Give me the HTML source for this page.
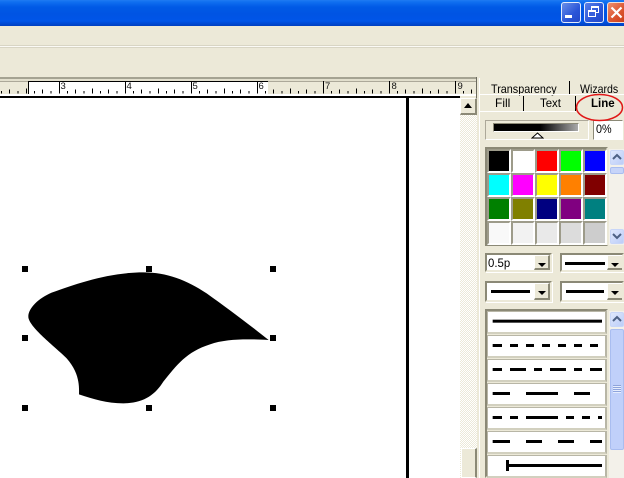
<!DOCTYPE html>
<html>
<head>
<meta charset="utf-8">
<style>
html,body{margin:0;padding:0;width:624px;height:478px;overflow:hidden;background:#ece9d8}
body{position:relative;font-family:"Liberation Sans",sans-serif;color:#000}
.a{position:absolute;box-sizing:border-box}
.t{position:absolute;font-size:12px;line-height:14px;white-space:nowrap;transform-origin:0 0}
.sw{position:absolute;width:24px;height:24px;box-sizing:border-box;border:2px solid;border-color:#9d9b8a #fff #fff #9d9b8a;outline:0}
.sw i{position:absolute;left:0;top:0;width:20px;height:20px}
.dd{position:absolute;box-sizing:border-box;background:#fff;border:2px solid;border-color:#8b8976 #ece9d8 #ece9d8 #8b8976;box-shadow:1px 1px 0 #fff}
.btn{position:absolute;right:0;top:0;bottom:0;width:16px;background:#ece9d8;border-right:2px solid #8b8976;border-bottom:2px solid #8b8976;border-left:1px solid #fff;border-top:1px solid #fff;box-sizing:border-box}
.btn:after{content:"";position:absolute;left:3px;top:7px;border:4px solid transparent;border-top:4px solid #000;border-bottom:0}
.it{position:absolute;left:487px;width:120px;height:23px;background:#fff;box-sizing:border-box;border:1px solid #b8b6a6;border-right:2px solid #b8b6a6;border-bottom:2px solid #d2d0bf}
</style>
</head>
<body>
<!-- title bar -->
<div class="a" style="left:0;top:0;width:624px;height:26px;background:linear-gradient(#1f7bf3 0,#0f6ff0 2px,#005ae6 7px,#0054e3 14px,#0055e8 21px,#0048d0 24px,#003fc0 26px)"></div>
<div class="a" style="left:561px;top:2px;width:20px;height:21px;border:1px solid #e4ecfb;border-radius:3px;background:linear-gradient(135deg,#6a8fe8,#2a55d8 60%,#2348c8)"></div>
<div class="a" style="left:565px;top:15px;width:7px;height:3px;background:#fff"></div>
<div class="a" style="left:584px;top:2px;width:20px;height:21px;border:1px solid #e4ecfb;border-radius:3px;background:linear-gradient(135deg,#5a80e6,#2a55d8 60%,#2348c8)"></div>
<div class="a" style="left:591px;top:6px;width:8px;height:7px;border:1px solid #fff;border-top-width:2px"></div>
<div class="a" style="left:588px;top:10px;width:8px;height:7px;border:1px solid #fff;border-top-width:2px;background:#3860dc"></div>
<div class="a" style="left:607px;top:2px;width:20px;height:21px;border:1px solid #f0e0d8;border-radius:3px;background:linear-gradient(135deg,#ee9070,#dc5530 55%,#c83c18)"></div>
<svg class="a" style="left:610px;top:6px" width="14" height="14"><path d="M1.5 1.5L11.5 11.5M11.5 1.5L1.5 11.5" stroke="#fff" stroke-width="2.2" fill="none"/></svg>
<!-- toolbar separators -->
<div class="a" style="left:0;top:45px;width:624px;height:1px;background:#d8d5c4"></div>
<div class="a" style="left:0;top:46px;width:624px;height:1px;background:#fbfaf5"></div>
<div class="a" style="left:0;top:47px;width:624px;height:1px;background:#d8d5c4"></div>
<div class="a" style="left:0;top:77px;width:477px;height:2px;background:#a5a392"></div>
<div class="a" style="left:0;top:79px;width:477px;height:2px;background:#e2dfcd"></div>
<!-- ruler -->
<div class="a" style="left:28px;top:81px;width:240px;height:15px;background:#fff;border-left:1px solid #000;border-top:1px solid #000"></div>
<div class="a" style="left:0;top:81px;width:28px;height:1px;background:#aca899"></div>
<div class="a" style="left:268px;top:81px;width:208px;height:1px;background:#aca899"></div>
<div class="a" style="left:0;top:94px;width:476px;height:2px;background:#fff"></div>
<div class="a" style="left:476px;top:77px;width:1px;height:21px;background:#6b6a5e"></div>
<svg class="a" style="left:0;top:81px" width="476" height="15">
<defs>
<pattern id="p" x="59" y="0" width="66" height="15" patternUnits="userSpaceOnUse">
<path d="M0.5 0V12.5M8.5 10V12.5M16.5 8.5V12.5M25 10V12.5M33.5 7.5V12.5M41.5 10V12.5M49.5 8.5V12.5M58 10V12.5" stroke="#000" stroke-width="1" fill="none"/>
</pattern>
</defs>
<rect width="476" height="15" fill="url(#p)"/>
<g font-family="Liberation Sans" font-size="9.5" fill="#111">
<text x="60.5" y="8">3</text>
<text x="126.5" y="8">4</text>
<text x="192.5" y="8">5</text>
<text x="258.5" y="8">6</text>
<text x="325" y="8">7</text>
<text x="391.5" y="8">8</text>
<text x="457.5" y="8">9</text>
</g>
</svg>
<div class="a" style="left:0;top:96px;width:460px;height:2px;background:#000"></div>
<!-- canvas -->
<div class="a" style="left:0;top:98px;width:460px;height:380px;background:#fff"></div>
<div class="a" style="left:406px;top:98px;width:3px;height:380px;background:#000"></div>
<svg class="a" style="left:0;top:97px" width="460" height="381" viewBox="0 97 460 381">
<g transform="translate(10 255) scale(.33333)">
<path d="M207 418C208 385 205 350 170 310C135 275 55 215 55 185C55 160 85 130 125 113C200 85 300 52 400 52C470 52 530 75 590 115C650 158 720 210 776 255C720 252 650 250 600 268C530 290 500 330 460 380C435 420 400 445 340 445C290 445 250 432 207 418Z" fill="#000"/>
</g>
<g fill="#000">
<rect x="22" y="266" width="6" height="6"/><rect x="146" y="266" width="6" height="6"/><rect x="270" y="266" width="6" height="6"/>
<rect x="22" y="335" width="6" height="6"/><rect x="270" y="335" width="6" height="6"/>
<rect x="22" y="405" width="6" height="6"/><rect x="146" y="405" width="6" height="6"/><rect x="270" y="405" width="6" height="6"/>
</g>
</svg>
<!-- canvas scrollbar -->
<div class="a" style="left:460px;top:98px;width:17px;height:380px;background-color:#f6f4ec;background-image:repeating-conic-gradient(#ece9d8 0 25%,#fff 0 50%);background-size:2px 2px"></div>
<div class="a" style="left:460px;top:98px;width:17px;height:17px;background:#ece9d8;border:1px solid #fff;border-right:2px solid #8b8976;border-bottom:2px solid #8b8976"></div>
<div class="a" style="left:464px;top:103px;border:4px solid transparent;border-bottom:5px solid #000;border-top:0"></div>
<div class="a" style="left:461px;top:448px;width:16px;height:30px;background:#ece9d8;border:1px solid #fff;border-right:2px solid #8b8976"></div>
<!-- panel -->
<div class="a" style="left:477px;top:78px;width:147px;height:400px;background:#ece9d8"></div>
<div class="a" style="left:479px;top:78px;width:1px;height:400px;background:#fff"></div>
<div class="t" style="left:491px;top:82px;transform:scaleX(.9)">Transparency</div>
<div class="t" style="left:580px;top:82px;transform:scaleX(.88)">Wizards</div>
<div class="a" style="left:569px;top:81px;width:1px;height:14px;background:#000"></div>
<div class="a" style="left:480px;top:94px;width:144px;height:1px;background:#fff"></div>
<div class="t" style="left:495px;top:96px">Fill</div>
<div class="t" style="left:540px;top:96px;transform:scaleX(.95)">Text</div>
<div class="t" style="left:591px;top:96px;font-weight:bold;transform:scaleX(.96)">Line</div>
<div class="a" style="left:523px;top:96px;width:1px;height:15px;background:#000"></div>
<div class="a" style="left:575px;top:96px;width:1px;height:15px;background:#000"></div>
<div class="a" style="left:480px;top:111px;width:96px;height:1px;background:#fff"></div>
<!-- gradient box -->
<div class="a" style="left:485px;top:120px;width:104px;height:20px;border:1px solid;border-color:#aca899 #fff #fff #aca899"></div>
<div class="a" style="left:493px;top:123px;width:86px;height:9px;border:1px solid;border-color:#8b8976 #fff #fff #8b8976;background:linear-gradient(90deg,#000 0,#000 55%,#aaa 100%)"></div>
<svg class="a" style="left:531px;top:132px" width="13" height="7"><path d="M6.5 1L12 6H1Z" fill="#fff" stroke="#000"/></svg>
<div class="a" style="left:593px;top:120px;width:30px;height:20px;background:#fff;border:1px solid;border-color:#8b8976 #fff #fff #8b8976"></div>
<div class="t" style="left:596px;top:122px;transform:scaleX(.9)">0%</div>
<!-- swatches -->
<div class="a" style="left:485px;top:147px;width:123px;height:99px;border:2px solid;border-color:#8b8976 #ece9d8 #8b8976 #8b8976"></div>
<div class="sw" style="left:487px;top:149px"><i style="background:#000"></i></div>
<div class="sw" style="left:511px;top:149px"><i style="background:#fff"></i></div>
<div class="sw" style="left:535px;top:149px"><i style="background:#f00"></i></div>
<div class="sw" style="left:559px;top:149px"><i style="background:#0f0"></i></div>
<div class="sw" style="left:583px;top:149px"><i style="background:#00f"></i></div>
<div class="sw" style="left:487px;top:173px"><i style="background:#0ff"></i></div>
<div class="sw" style="left:511px;top:173px"><i style="background:#f0f"></i></div>
<div class="sw" style="left:535px;top:173px"><i style="background:#ff0"></i></div>
<div class="sw" style="left:559px;top:173px"><i style="background:#ff8000"></i></div>
<div class="sw" style="left:583px;top:173px"><i style="background:#800000"></i></div>
<div class="sw" style="left:487px;top:197px"><i style="background:#008000"></i></div>
<div class="sw" style="left:511px;top:197px"><i style="background:#808000"></i></div>
<div class="sw" style="left:535px;top:197px"><i style="background:#000080"></i></div>
<div class="sw" style="left:559px;top:197px"><i style="background:#800080"></i></div>
<div class="sw" style="left:583px;top:197px"><i style="background:#008080"></i></div>
<div class="sw" style="left:487px;top:221px"><i style="background:#f9f9f9"></i></div>
<div class="sw" style="left:511px;top:221px"><i style="background:#f2f2f2"></i></div>
<div class="sw" style="left:535px;top:221px"><i style="background:#e9e9e9"></i></div>
<div class="sw" style="left:559px;top:221px"><i style="background:#dcdcdc"></i></div>
<div class="sw" style="left:583px;top:221px"><i style="background:#cdcdcd"></i></div>
<!-- swatch scrollbar -->
<div class="a" style="left:609px;top:149px;width:15px;height:96px;background:#f3f1ea"></div>
<div class="a" style="left:610px;top:150px;width:14px;height:15px;background:linear-gradient(135deg,#dfe8fd,#bccdf8);border:1px solid #c8d6f8;border-radius:2px"></div>
<svg class="a" style="left:611px;top:153px" width="12" height="8"><path d="M2 6L6 2L10 6" stroke="#4d6185" stroke-width="2" fill="none"/></svg>
<div class="a" style="left:610px;top:167px;width:14px;height:7px;background:#c6d4f9;border:1px solid #a9bdf0;border-radius:2px"></div>
<div class="a" style="left:610px;top:229px;width:14px;height:15px;background:linear-gradient(135deg,#dfe8fd,#bccdf8);border:1px solid #c8d6f8;border-radius:2px"></div>
<svg class="a" style="left:611px;top:232px" width="12" height="8"><path d="M2 2L6 6L10 2" stroke="#4d6185" stroke-width="2" fill="none"/></svg>
<!-- dropdowns -->
<div class="dd" style="left:485px;top:253px;width:67px;height:19px"><div class="btn"></div></div>
<div class="t" style="left:488px;top:256px;transform:scaleX(.95)">0.5p</div>
<div class="dd" style="left:560px;top:253px;width:64px;height:19px"><div class="btn" style="border-right:0;width:15px"></div></div>
<div class="a" style="left:565px;top:262px;width:40px;height:3px;background:#000"></div>
<div class="dd" style="left:485px;top:281px;width:67px;height:21px"><div class="btn"></div></div>
<div class="a" style="left:491px;top:290px;width:39px;height:3px;background:#000"></div>
<div class="dd" style="left:560px;top:281px;width:64px;height:21px"><div class="btn" style="border-right:0;width:15px"></div></div>
<div class="a" style="left:566px;top:290px;width:38px;height:3px;background:#000"></div>
<!-- line list -->
<div class="a" style="left:485px;top:309px;width:123px;height:169px;border:2px solid;border-color:#8b8976 #ece9d8 transparent #8b8976"></div>
<div class="it" style="top:311px"></div>
<div class="it" style="top:335px"></div>
<div class="it" style="top:359px"></div>
<div class="it" style="top:383px"></div>
<div class="it" style="top:407px"></div>
<div class="it" style="top:431px"></div>
<div class="it" style="top:455px"></div>
<svg class="a" style="left:470px;top:305px" width="154" height="173" viewBox="0 0 462 519">
<g fill="#000">
<rect x="68" y="44" width="328" height="9"/>
<rect x="68" y="117" width="28" height="9"/><rect x="120" y="117" width="24" height="9"/><rect x="168" y="117" width="24" height="9"/><rect x="216" y="117" width="24" height="9"/><rect x="264" y="117" width="24" height="9"/><rect x="312" y="117" width="24" height="9"/><rect x="360" y="117" width="24" height="9"/>
<rect x="68" y="189" width="28" height="9"/><rect x="120" y="189" width="48" height="9"/><rect x="192" y="189" width="24" height="9"/><rect x="240" y="189" width="48" height="9"/><rect x="312" y="189" width="24" height="9"/><rect x="360" y="189" width="36" height="9"/>
<rect x="68" y="261" width="52" height="9"/><rect x="168" y="261" width="96" height="9"/><rect x="312" y="261" width="48" height="9"/>
<rect x="68" y="333" width="28" height="9"/><rect x="120" y="333" width="24" height="9"/><rect x="168" y="333" width="96" height="9"/><rect x="288" y="333" width="24" height="9"/><rect x="336" y="333" width="24" height="9"/><rect x="384" y="333" width="12" height="9"/>
<rect x="68" y="405" width="52" height="9"/><rect x="168" y="405" width="48" height="9"/><rect x="264" y="405" width="48" height="9"/><rect x="360" y="405" width="36" height="9"/>
<rect x="108" y="465" width="9" height="33"/><rect x="117" y="477" width="279" height="9"/>
</g>
</svg>
<!-- list scrollbar -->
<div class="a" style="left:609px;top:311px;width:15px;height:167px;background:#f3f1ea"></div>
<div class="a" style="left:610px;top:312px;width:14px;height:15px;background:linear-gradient(135deg,#dfe8fd,#bccdf8);border:1px solid #c8d6f8;border-radius:2px"></div>
<svg class="a" style="left:611px;top:315px" width="12" height="8"><path d="M2 6L6 2L10 6" stroke="#4d6185" stroke-width="2" fill="none"/></svg>
<div class="a" style="left:610px;top:329px;width:14px;height:121px;background:#c0d0fa;border:1px solid #a9bdf0;border-radius:2px"></div>
<div class="a" style="left:613px;top:385px;width:8px;height:8px;background:repeating-linear-gradient(#8ea4dc 0 1px,#e6edfd 1px 2px)"></div>
<!-- red ellipse -->
<svg class="a" style="left:570px;top:90px" width="54" height="34"><ellipse cx="29.5" cy="17.5" rx="23" ry="13" fill="none" stroke="#e01818" stroke-width="1.5"/></svg>
</body>
</html>
